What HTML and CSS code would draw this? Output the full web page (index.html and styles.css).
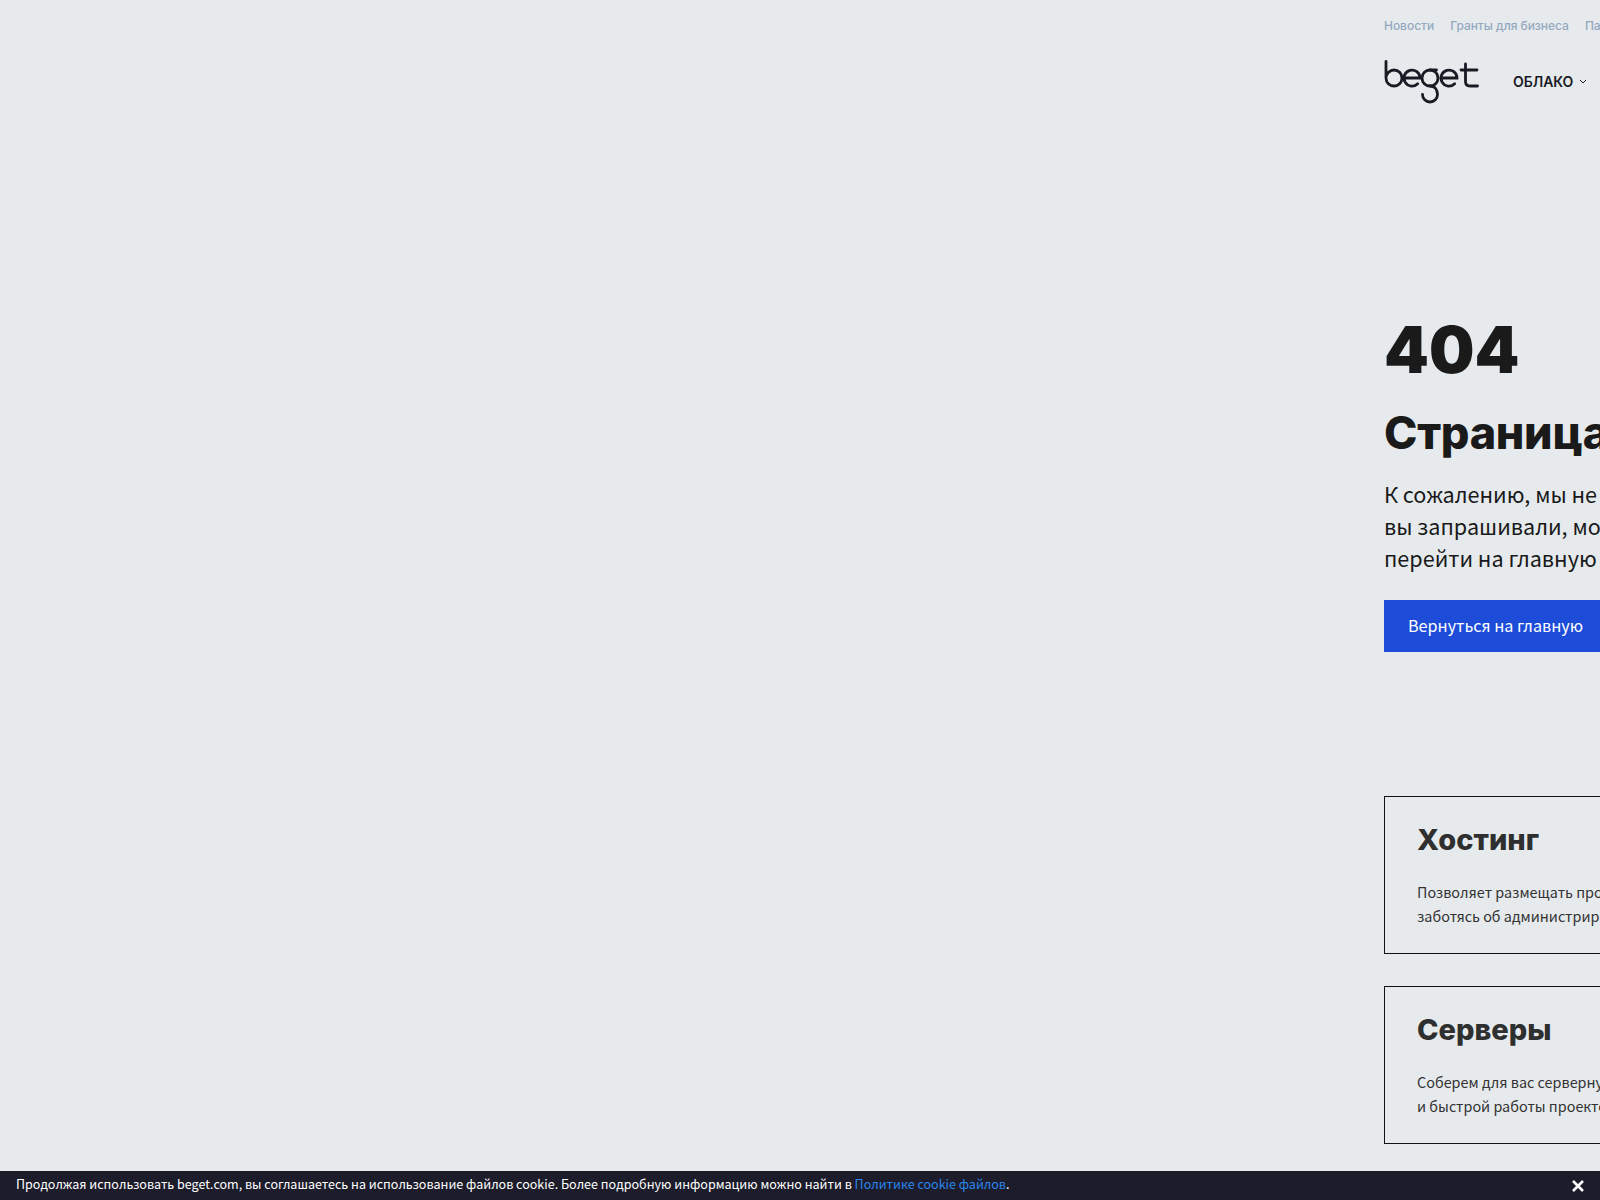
FILE: index.html
```html
<!DOCTYPE html>
<html lang="ru">
<head>
    <meta charset="UTF-8">
    <meta name="viewport" content="width=device-width, initial-scale=1.0">
    <title>Страница не найдена</title>
    <link rel="stylesheet" href="styles.css">
</head>
<body>
    <div class="page-content">
        <div class="top-links">
            <a>Новости</a>
            <a>Гранты для бизнеса</a>
            <a>Партнерам</a>
        </div>
        <div class="main-nav">
            <svg class="logo" width="96" height="46" viewBox="0 0 96 46" fill="none" stroke="#1a1a24" stroke-width="2.800" stroke-linecap="round">
                <path d="M2 1.500V18a8 8 0 1 0 8-8C5.500 10 2 14 2 18"/>
                <path d="M20.300 18H36a8 8 0 1 0-2.300 5.700"/>
                <circle cx="46" cy="18" r="8"/>
                <path d="M46 26c5 0 7.500 4 7.500 8.500a7.500 7.500 0 1 1-15 0"/>
                <path d="M46 10H52.500"/>
                <path d="M57.300 18H73a8 8 0 1 0-2.300 5.700"/>
                <path d="M81.500 4V21.500c0 3 1.500 4.500 4.500 4.500h7.500M77 10H93"/>
            </svg>
            <a class="nav-item">ОБЛАКО
                <svg width="8" height="6" viewBox="0 0 8 6" fill="none" stroke="#1a1a24" stroke-width="1"><path d="M1 1l3 3 3-3"/></svg>
            </a>
        </div>

        <div class="error-block">
            <div class="code">404</div>
            <h1>Страница не найдена</h1>
            <p>К сожалению, мы не можем найти страницу, которую<br>вы запрашивали, может быть она была удалена. Вы можете<br>перейти на главную страницу нашего сайта.</p>
            <a class="btn">Вернуться на главную</a>
        </div>

        <div class="cards">
            <div class="card">
                <h3>Хостинг</h3>
                <p>Позволяет размещать проекты любой сложности, не<br>заботясь об администрировании сервера.</p>
            </div>
            <div class="card">
                <h3>Серверы</h3>
                <p>Соберем для вас серверную конфигурацию для надежной<br>и быстрой работы проектов любого масштаба.</p>
            </div>
        </div>
    </div>

    <div class="cookie-bar">
        <span class="cookie-text">Продолжая использовать beget.com, вы соглашаетесь на использование файлов cookie. Более подробную информацию можно найти в <a>Политике cookie файлов</a>.</span>
        <svg class="cookie-close" width="12" height="12" viewBox="0 0 12 12" stroke="#fff" stroke-width="2.600"><path d="M1 1l10 10M11 1L1 11"/></svg>
    </div>
</body>
</html>
```

FILE: styles.css
```css
html, body {
    margin: 0;
    height: 1200px;
    overflow: hidden;
}

body {
    background-color: #e6eaed;
    font-family: "Noto Sans CJK SC", "Noto Sans", sans-serif;
    color: #1a1a1a;
}

.page-content {
    width: 800px;
    margin-left: 1384px;
}

.top-links {
    display: flex;
    gap: 16px;
    padding-top: 18px;
    height: 16px;
    white-space: nowrap;
    font-family: Inter, sans-serif;
    font-size: 12px;
    line-height: 16px;
    font-weight: 500;
    letter-spacing: -0.03px;
    color: #94a8c0;
}

.main-nav {
    display: flex;
    align-items: flex-start;
    gap: 33px;
    margin-top: 26px;
    height: 46px;
}

.logo {
    flex: none;
}

.nav-item {
    display: flex;
    align-items: center;
    gap: 6px;
    margin-top: 12px;
    font-family: Inter, sans-serif;
    font-size: 14px;
    line-height: 20px;
    font-weight: 600;
    letter-spacing: -0.05px;
    color: #1a1a24;
}

.error-block {
    padding-top: 204px;
}

.code {
    font-family: Inter, sans-serif;
    font-size: 64px;
    line-height: 80px;
    font-weight: 900;
    color: #1a1a1a;
}

.error-block h1 {
    margin: 15px 0 0;
    font-family: Inter, sans-serif;
    font-size: 45px;
    line-height: 56px;
    font-weight: 800;
    letter-spacing: -0.3px;
    white-space: nowrap;
}

.error-block p {
    margin: 17px 0 0;
    font-size: 21.6px;
    line-height: 32px;
    white-space: nowrap;
}

.btn {
    display: inline-block;
    margin-top: 26px;
    padding: 0 24px 2px;
    background: #1c4cd8;
    color: white;
    font-size: 16.15px;
    line-height: 50px;
}

.cards {
    display: flex;
    flex-direction: column;
    gap: 32px;
    margin-top: 144px;
}

.card {
    box-sizing: border-box;
    width: 640px;
    height: 158px;
    padding: 25px 32px;
    border: 1px solid #111;
}

.card h3 {
    margin: 0;
    font-family: Inter, sans-serif;
    font-size: 29px;
    line-height: 36px;
    font-weight: 800;
    color: #2f2f2f;
}

.card p {
    margin: 22px 0 0;
    font-size: 14.4px;
    line-height: 24px;
    color: #333;
    white-space: nowrap;
}

.cookie-bar {
    position: fixed;
    left: 0;
    right: 0;
    bottom: 0;
    height: 29px;
    display: flex;
    align-items: center;
    justify-content: space-between;
    padding: 0 16px;
    background: #1c1c2b;
    color: white;
    font-size: 12.54px;
    line-height: 26px;
}

.cookie-text {
    padding-bottom: 4px;
}

.cookie-bar a {
    color: #2a86ee;
}
```
